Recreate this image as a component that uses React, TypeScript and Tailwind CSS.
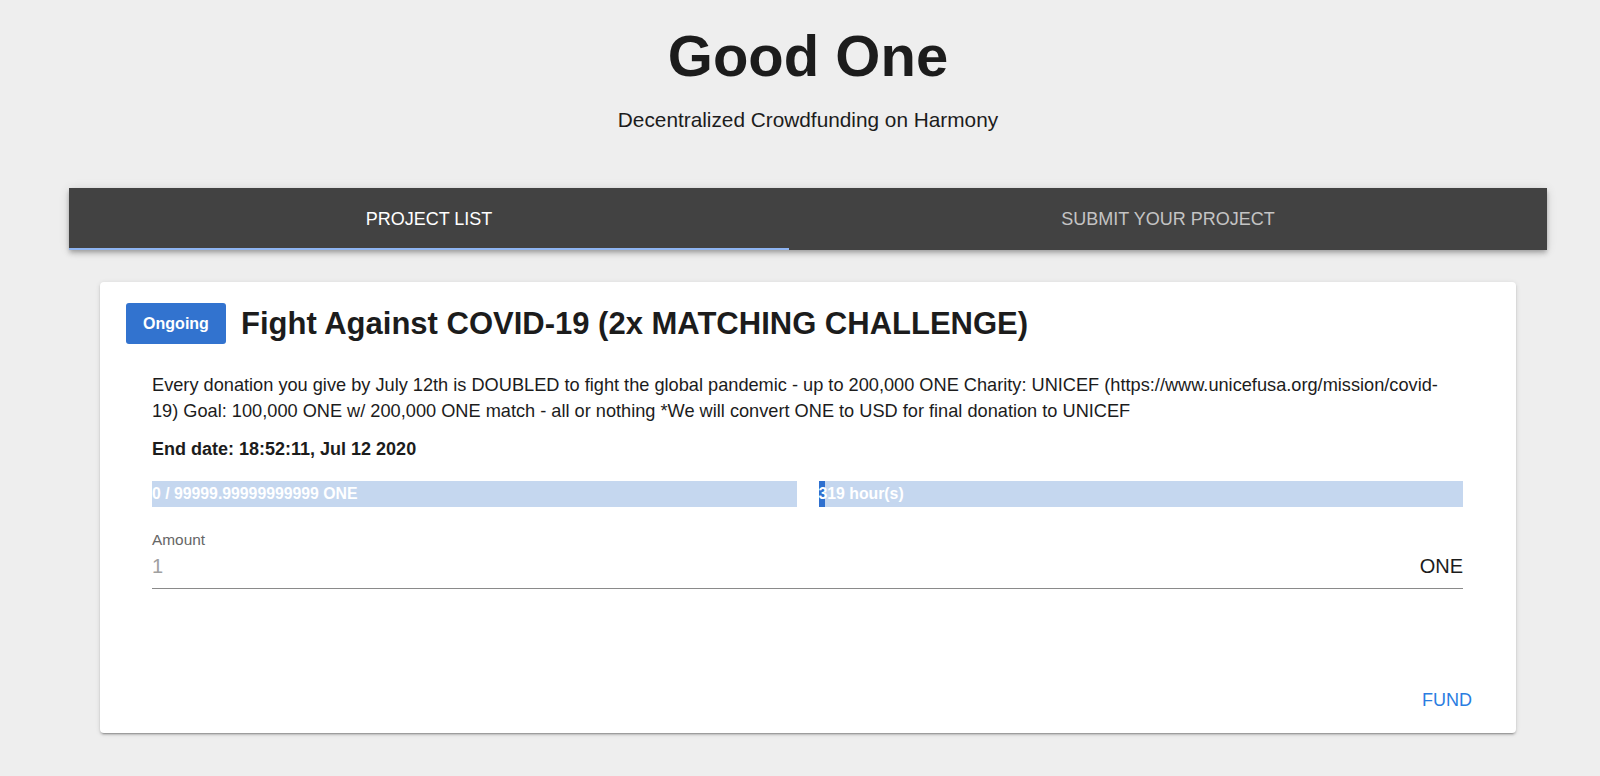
import { useState } from 'react';

const tabs = ['PROJECT LIST', 'SUBMIT YOUR PROJECT'];

function ProgressBar({ label, percent }: { label: string; percent: number }) {
  return (
    <div className="relative h-[26px] bg-[#c5d7ef]">
      <div className="h-full bg-[#2f70cf]" style={{ width: `${percent}%` }} />
      <span className="absolute left-0 top-0 text-[15.8px] font-bold leading-[26px] text-white">{label}</span>
    </div>
  );
}

function ProjectCard() {
  const [amount, setAmount] = useState('');

  return (
    <div className="mx-[84px] mt-[32px] rounded-[4px] bg-white pb-[22px] pt-[21px] shadow-[0_3px_1px_-2px_rgba(0,0,0,0.2),0_2px_2px_0_rgba(0,0,0,0.14),0_1px_5px_0_rgba(0,0,0,0.12)]">
      <div className="flex items-center gap-[15px] pl-[26px]">
        <span className="flex h-[41px] w-[100px] items-center justify-center rounded-[3px] bg-[#3273cf] text-[16px] font-bold text-white">
          Ongoing
        </span>
        <h2 className="text-[31px] font-bold leading-[36px] text-[#1c1c1c]">Fight Against COVID-19 (2x MATCHING CHALLENGE)</h2>
      </div>

      <div className="pl-[52px] pr-[53px]">
        <p className="mt-[28px] pr-[10px] text-[18.2px] leading-[26px] text-[#1c1c1c]">
          Every donation you give by July 12th is DOUBLED to fight the global pandemic - up to 200,000 ONE Charity: UNICEF
          (https://www.unicefusa.org/mission/covid-19) Goal: 100,000 ONE w/ 200,000 ONE match - all or nothing *We will convert
          ONE to USD for final donation to UNICEF
        </p>
        <p className="mt-[12px] text-[18px] font-bold leading-[26px] text-[#1c1c1c]">End date: 18:52:11, Jul 12 2020</p>

        <div className="mt-[19px] grid grid-cols-2 gap-[22px]">
          <ProgressBar label="0 / 99999.99999999999 ONE" percent={0} />
          <ProgressBar label="319 hour(s)" percent={1} />
        </div>

        <label className="mt-[24px] block text-[15.4px] leading-[18px] text-[#666666]">Amount</label>
        <div className="mt-[5px] flex items-center border-b border-[#8a8a8a] pb-[10px]">
          <input
            value={amount}
            onChange={(e) => setAmount(e.target.value)}
            placeholder="1"
            className="flex-1 bg-transparent text-[20px] leading-[24px] text-[#1c1c1c] outline-none placeholder:text-[#a0a0a0]"
          />
          <span className="text-[20px] leading-[24px] text-[#1c1c1c]">ONE</span>
        </div>
      </div>

      <div className="mt-[100px] flex justify-end pr-[44px]">
        <button type="button" className="text-[18px] leading-[22px] text-[#2a7de1]">
          FUND
        </button>
      </div>
    </div>
  );
}

export default function App() {
  const [active, setActive] = useState(0);

  return (
    <div className="min-h-screen bg-[#eeeeee] pl-4 font-['Liberation_Sans',Arial,sans-serif]">
      <h1 className="pt-[27px] text-center text-[58px] font-bold leading-[58px] text-[#1c1c1c]">Good One</h1>
      <p className="mt-[23px] text-center text-[20.8px] leading-[24px] text-[#1c1c1c]">Decentralized Crowdfunding on Harmony</p>

      <div className="mx-[53px] mt-[56px] flex h-[62px] bg-[#424242] shadow-[0_2px_4px_-1px_rgba(0,0,0,0.2),0_4px_5px_0_rgba(0,0,0,0.14),0_1px_10px_0_rgba(0,0,0,0.12)]">
        {tabs.map((tab, i) => (
          <button
            key={tab}
            type="button"
            onClick={() => setActive(i)}
            className={`relative flex items-center justify-center text-[18px] ${i === 0 ? 'w-[720px]' : 'flex-1'} ${
              active === i ? 'text-white' : 'text-[#c4c4c4]'
            }`}
          >
            {tab}
            {active === i ? <span className="absolute bottom-0 left-0 h-[2px] w-full bg-[#8fb5f2]" /> : null}
          </button>
        ))}
      </div>

      <ProjectCard />
    </div>
  );
}
